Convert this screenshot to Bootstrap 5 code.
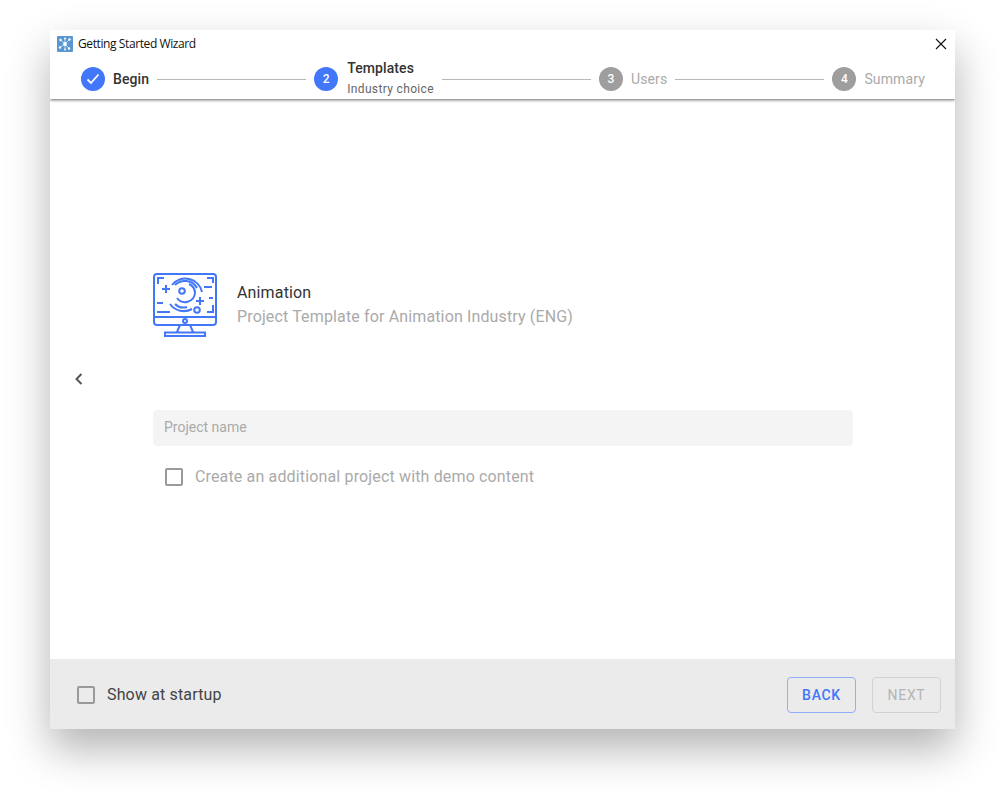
<!DOCTYPE html>
<html lang="en">
<head>
<meta charset="utf-8">
<title>Getting Started Wizard</title>
<link href="https://cdn.jsdelivr.net/npm/bootstrap@5.3.0/dist/css/bootstrap.min.css" rel="stylesheet">
<style>
html,body{height:100%;background:#fff;overflow:hidden}
body{font-family:Roboto,"Liberation Sans",sans-serif;padding:30px 50px 70px}
.wiz-win{width:905px;height:699px;background:#fff;box-shadow:0 20px 40px rgba(0,0,0,.3)}
.wiz-head{height:69px;box-shadow:0 1px 3px rgba(0,0,0,.6);clip-path:inset(0 0 -6px 0);position:relative;z-index:1;flex:none}
.wiz-title{height:28px;padding:0 7px;gap:5px;font:12px/28px "Open Sans","Noto Sans",sans-serif;color:#111;letter-spacing:-.4px}
.wiz-x{width:12px;height:12px;margin-right:1px;margin-top:-1px}
.wiz-steps{padding:0 30px 0 31px;height:42px;gap:8px}
.wiz-dot{width:24px;height:24px;border-radius:50%;background:#4277f9;color:#fff;font-size:12px;font-weight:500;flex:none}
.wiz-dot.off{background:#9e9e9e}
.wiz-lab{font-size:14px;font-weight:500;color:#333;line-height:20px;letter-spacing:.1px}
.wiz-lab.off{color:#aaa;font-weight:400;letter-spacing:.13px}
.wiz-sub{font-size:12px;font-weight:400;color:#666;line-height:20px;letter-spacing:.35px;margin-top:1px}
.wiz-line{flex:1 1 0;height:1px;background:#b8b8b8}
.wiz-step2{margin-left:1px;margin-bottom:1px}
.wiz-main{flex:1 1 0;position:relative;padding:174px 102px 0 103px}
.wiz-prev{position:absolute;left:22px;top:273px;width:13px;height:14px}
.wiz-tpl{gap:20px}
.wiz-name{font-size:16px;line-height:24px;color:#333;letter-spacing:.15px}
.wiz-desc{font-size:16px;line-height:24px;color:#aaa;letter-spacing:.14px}
.wiz-input.form-control{height:36px;margin-top:73px;background:#f4f4f4;border:0;border-radius:4px;padding:0 11px 2px;font-size:14px}
.wiz-input.form-control::placeholder{color:#aaa;opacity:1}
.wiz-check.form-check-input{width:18px;height:18px;margin:0;flex:none;border:2px solid #9a9a9a;border-radius:2px;background-color:transparent}
.wiz-checkrow{margin-top:22px;padding-left:12px;gap:12px;font-size:16px;line-height:18px;color:#aaa;letter-spacing:.15px}
.wiz-foot{height:70px;background:#ebebeb;padding:1px 14px 0 27px;flex:none}
.wiz-foot .wiz-checkrow{margin:0;padding:0;color:#444;gap:12px}
.wiz-btn.btn{width:69px;height:36px;padding:0;font-size:14px;font-weight:500;letter-spacing:.7px;border-radius:4px;line-height:34px}
.wiz-back.btn{color:#4277f9;border:1px solid #92aefa;background:transparent}
.wiz-next.btn{color:#b4b4b4;border:1px solid #d2d2d2;background:transparent;font-weight:400;opacity:1}
</style>
</head>
<body>
<div class="wiz-win d-flex flex-column">
  <header class="wiz-head">
    <div class="wiz-title d-flex align-items-center">
      <svg width="16" height="16" viewBox="0 0 16 16" aria-hidden="true">
        <rect width="16" height="16" rx="1" fill="#5a97d0"/>
        <g stroke="#d6e7f6" stroke-width=".8"><path d="M8 8 3.500 4M8 8l4.500-4.500M8 8l-5 3.500M8 8l4 4.500M8 8V2.500M8 8v5.500"/></g>
        <g fill="#fff"><circle cx="8" cy="8" r="1.900"/><circle cx="3.500" cy="4" r="1.200"/><circle cx="12.500" cy="3.500" r="1.200"/><circle cx="3" cy="11.500" r="1.200"/><circle cx="12" cy="12.500" r="1.200"/><circle cx="8" cy="2.500" r="1"/><circle cx="8" cy="13.500" r=".9"/></g>
      </svg>
      <span class="flex-grow-1">Getting Started Wizard</span>
      <svg class="wiz-x" viewBox="0 0 12 12" aria-hidden="true"><path d="M1 1l10 10M11 1 1 11" stroke="#111" stroke-width="1.100" fill="none"/></svg>
    </div>
    <div class="wiz-steps d-flex align-items-center">
      <span class="wiz-dot d-flex align-items-center justify-content-center"><svg width="14" height="12" viewBox="0 0 14 12" aria-hidden="true"><path d="M1.500 6.500 5 10l7.500-8.500" fill="none" stroke="#fff" stroke-width="1.800"/></svg></span>
      <span class="wiz-lab">Begin</span>
      <span class="wiz-line"></span>
      <span class="wiz-dot d-flex align-items-center justify-content-center">2</span>
      <div class="wiz-lab wiz-step2"><div>Templates</div><div class="wiz-sub">Industry choice</div></div>
      <span class="wiz-line"></span>
      <span class="wiz-dot off d-flex align-items-center justify-content-center">3</span>
      <span class="wiz-lab off">Users</span>
      <span class="wiz-line"></span>
      <span class="wiz-dot off d-flex align-items-center justify-content-center">4</span>
      <span class="wiz-lab off">Summary</span>
    </div>
  </header>
  <main class="wiz-main">
    <svg class="wiz-prev" viewBox="0 0 13 14" aria-hidden="true"><path d="M9.500 2 4.500 7l5 5" fill="none" stroke="#555" stroke-width="2"/></svg>
    <div class="d-flex align-items-center wiz-tpl">
      <svg width="64" height="64" viewBox="0 0 64 64" aria-hidden="true" fill="none" stroke="#4277f9" stroke-width="2">
        <rect x="1" y="1" width="62" height="51" rx="3"/>
        <path d="M1 44h62M27 52l-3 7M37 52l3 7M12 59.500h40v3.500H12z"/>
        <circle cx="32" cy="48" r="2"/>
        <path d="M5 11V5h6M54 5h6v5M60 32v7h-6M4 39h13M4 30h6M51 14h8M56 25h4M9 16h8M13 12v8M43 28h8M47 24v8"/>
        <circle cx="29" cy="18" r="2.800"/><circle cx="44" cy="37" r="2.800"/>
        <path d="M19 12A17 17 0 0 1 49 19M22 12A14 14 0 0 1 44 15M24 25A10 10 0 0 0 42 20M36 11A10 10 0 0 1 42 20M17 31A17 17 0 0 0 39 36M22 31A12 12 0 0 0 34 34"/>
      </svg>
      <div class="wiz-tpl-text">
        <div class="wiz-name">Animation</div>
        <div class="wiz-desc">Project Template for Animation Industry (ENG)</div>
      </div>
    </div>
    <input class="form-control wiz-input" type="text" placeholder="Project name">
    <label class="wiz-checkrow d-flex align-items-center">
      <input class="form-check-input wiz-check" type="checkbox">
      <span>Create an additional project with demo content</span>
    </label>
  </main>
  <footer class="wiz-foot d-flex align-items-center justify-content-between">
    <label class="wiz-checkrow d-flex align-items-center">
      <input class="form-check-input wiz-check" type="checkbox">
      <span>Show at startup</span>
    </label>
    <div class="d-flex gap-3">
      <button class="btn wiz-btn wiz-back" type="button">BACK</button>
      <button class="btn wiz-btn wiz-next" type="button" disabled>NEXT</button>
    </div>
  </footer>
</div>
<script src="https://cdn.jsdelivr.net/npm/bootstrap@5.3.0/dist/js/bootstrap.bundle.min.js"></script>
</body>
</html>
